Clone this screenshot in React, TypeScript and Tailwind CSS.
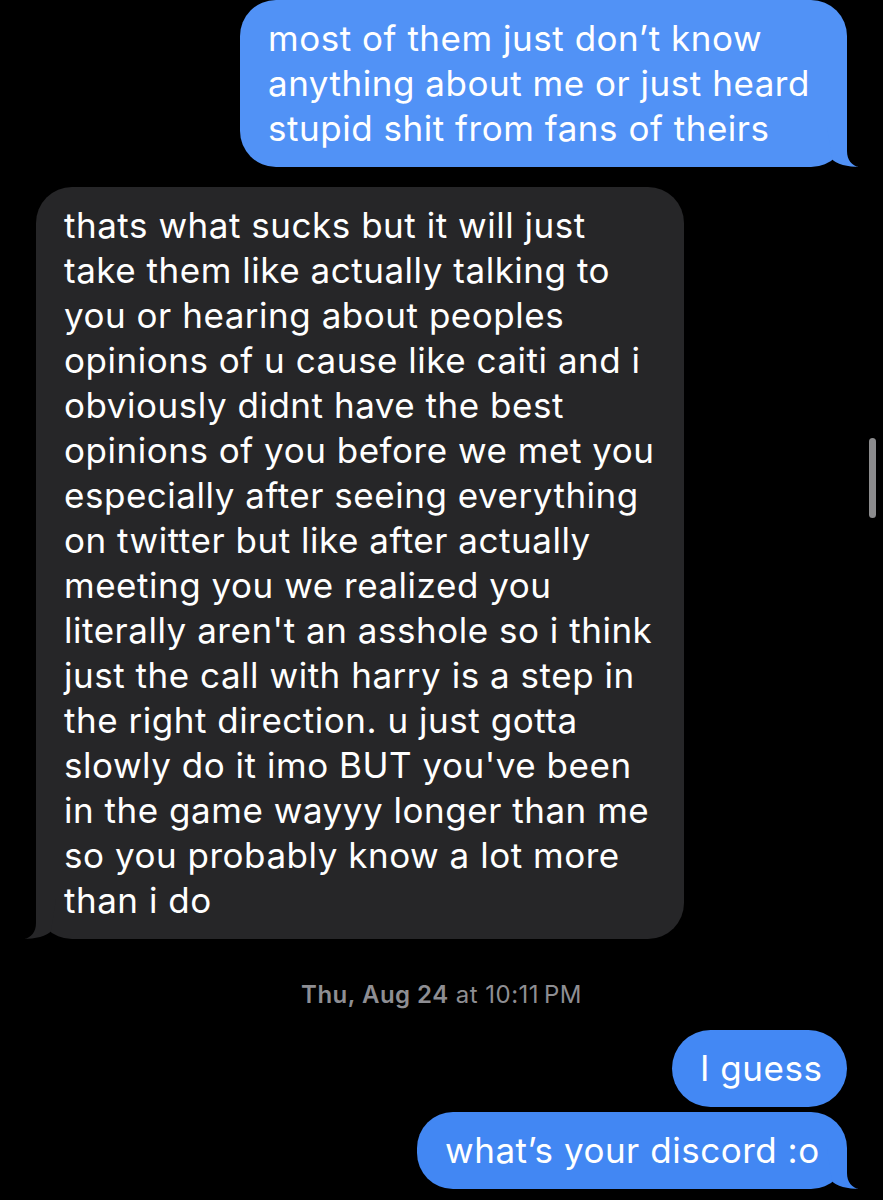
import React from "react";

type Side = "out" | "in";

interface Bubble {
  side: Side;
  lines: string[];
  width: string;
  tail?: boolean;
  color?: string;
  className?: string;
}

// iMessage-style tail, drawn relative to the bubble's bottom corner
function Tail({ side, color }: { side: Side; color: string }) {
  return (
    <svg
      viewBox="-20 -40 32 40"
      width={32}
      height={40}
      className={
        side === "out"
          ? "absolute bottom-0 right-[-12px]"
          : "absolute bottom-0 left-[-12px] -scale-x-100"
      }
    >
      <path
        d="M-15 -8 C-12 -3 2 0 12 0 C5 -1 0 -7 0 -16 L0 -40 L-20 -40 Z"
        fill={color}
      />
    </svg>
  );
}

function MessageBubble({ side, lines, width, tail, color, className }: Bubble) {
  const fill = color ?? (side === "out" ? "#5192f6" : "#262628");
  return (
    <div
      className={`relative ${width} ${side === "out" ? "self-end" : "self-start"} ${className ?? ""}`}
    >
      <div
        className="rounded-[36px] pt-[16px] pb-[16px] pl-[28px] text-[35px] leading-[45px] tracking-[0.015em] whitespace-nowrap"
        style={{ backgroundColor: fill }}
      >
        {lines.map((l, i) => (
          <div key={i}>{l}</div>
        ))}
      </div>
      {tail && <Tail side={side} color={fill} />}
    </div>
  );
}

const reply = [
  "thats what sucks but it will just",
  "take them like actually talking to",
  "you or hearing about peoples",
  "opinions of u cause like caiti and i",
  "obviously didnt have the best",
  "opinions of you before we met you",
  "especially after seeing everything",
  "on twitter but like after actually",
  "meeting you we realized you",
  "literally aren't an asshole so i think",
  "just the call with harry is a step in",
  "the right direction. u just gotta",
  "slowly do it imo BUT you've been",
  "in the game wayyy longer than me",
  "so you probably know a lot more",
  "than i do",
];

export default function App() {
  return (
    <div className="relative h-[1200px] overflow-hidden bg-black text-white font-['Inter','Liberation_Sans',sans-serif] antialiased">
      <div className="flex flex-col px-[36px]">
        <MessageBubble
          side="out"
          width="w-[607px]"
          tail
          lines={[
            "most of them just don’t know",
            "anything about me or just heard",
            "stupid shit from fans of theirs",
          ]}
        />

        <MessageBubble side="in" width="w-[648px]" tail lines={reply} className="mt-[20px]" />

        <div className="mt-[41px] text-center text-[24px] leading-[30px] tracking-[0.02em] text-[#8e8e93]">
          <span className="font-semibold">Thu, Aug 24</span> at 10:11{"\u202F"}PM
        </div>

        <div className="mt-[20px] self-end">
          <div className="w-[175px] rounded-full bg-[#4388f4] pt-[16px] pb-[16px] pl-[28px] text-[35px] leading-[45px] tracking-[0.015em] whitespace-nowrap">
            I guess
          </div>
        </div>

        <MessageBubble
          side="out"
          width="w-[430px]"
          tail
          color="#4287f3"
          lines={["what’s your discord :o"]}
          className="mt-[5px]"
        />
      </div>

      {/* scroll indicator */}
      <div className="absolute left-[869px] top-[438px] h-[80px] w-[7px] rounded-full bg-[#8c8c8e]" />
    </div>
  );
}
